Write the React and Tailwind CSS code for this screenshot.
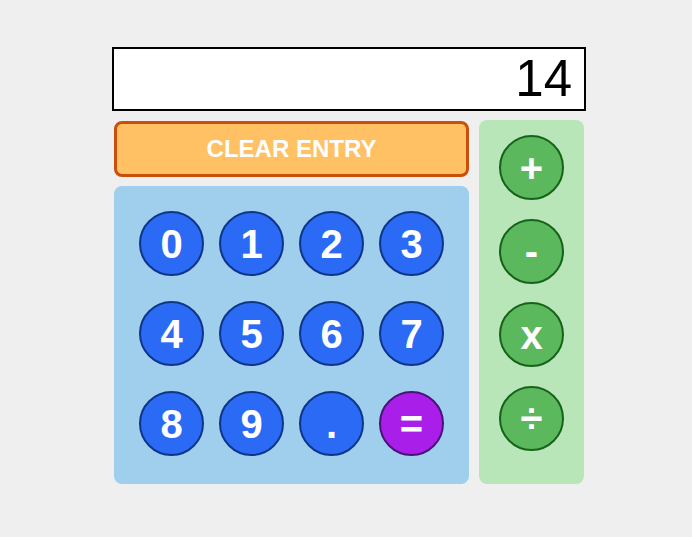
import React from "react";

const font = { fontFamily: '"Liberation Sans", Arial, sans-serif' };

function Digit({ label, purple }) {
  return (
    <button
      className={
        "w-[65px] h-[65px] rounded-full border-2 text-white font-bold text-[40px] leading-none flex items-center justify-center " +
        (purple ? "bg-[#a91fe9] border-[#4b1275]" : "bg-[#2a6af5] border-[#0e3587]")
      }
    >
      {label}
    </button>
  );
}

function Op({ label }) {
  return (
    <button className="w-[65px] h-[65px] rounded-full border-2 border-[#17621a] bg-[#5cb85c] text-white font-bold text-[40px] leading-none flex items-center justify-center">
      {label}
    </button>
  );
}

export default function App() {
  const digits = ["0", "1", "2", "3", "4", "5", "6", "7", "8", "9", "."];
  return (
    <div className="w-[692px] h-[537px] bg-[#efefef] pt-[47px]" style={font}>
      <div className="ml-[112px] w-[474px] h-16 border-2 border-black bg-white flex items-center justify-end pr-[12px] text-[51px] text-black">
        14
      </div>
      <div className="ml-[114px] w-[470px] mt-[9px] flex gap-[10px]">
        <div className="w-[355px] flex flex-col">
          <button className="h-[56px] w-full rounded-lg border-[3px] border-[#c94f0b] bg-[#ffc163] text-white font-bold text-2xl flex items-center justify-center mt-px">
            CLEAR ENTRY
          </button>
          <div className="mt-[9px] bg-[#a0cfee] rounded-lg h-[298px] pl-[25px] pt-[25px] grid grid-cols-[repeat(4,65px)] gap-x-[15px] gap-y-[25px] content-start">
            {digits.map((d) => (
              <Digit key={d} label={d} />
            ))}
            <Digit label="=" purple />
          </div>
        </div>
        <div className="w-[105px] h-[364px] bg-[#b8e6b8] rounded-lg flex flex-col items-center pt-[15px] gap-[18.5px]">
          <Op label="+" />
          <Op label="-" />
          <Op label="x" />
          <Op label="÷" />
        </div>
      </div>
    </div>
  );
}
